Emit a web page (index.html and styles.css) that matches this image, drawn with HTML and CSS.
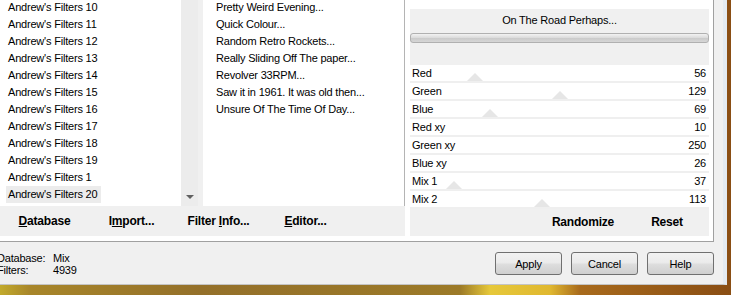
FILE: index.html
```html
<!DOCTYPE html>
<html lang="en">
  <head>
    <meta charset="UTF-8" />
    <title>Filters Unlimited</title>
    <link rel="stylesheet" href="styles.css">
  </head>
  <body>
    <div class="window">
      <div class="group">
        <div class="left">
          <div class="lists">
            <div class="list categories">
              <ul class="items">
                <li>Andrew's Filters 10</li>
                <li>Andrew's Filters 11</li>
                <li>Andrew's Filters 12</li>
                <li>Andrew's Filters 13</li>
                <li>Andrew's Filters 14</li>
                <li>Andrew's Filters 15</li>
                <li>Andrew's Filters 16</li>
                <li>Andrew's Filters 17</li>
                <li>Andrew's Filters 18</li>
                <li>Andrew's Filters 19</li>
                <li>Andrew's Filters 1</li>
                <li class="selected">Andrew's Filters 20</li>
                <li>Andrew's Filters 21</li>
              </ul>
              <div class="scrollbar"><span class="arrow-down"></span></div>
            </div>
            <div class="list effects">
              <ul class="items">
                <li>Pretty Weird Evening...</li>
                <li>Quick Colour...</li>
                <li>Random Retro Rockets...</li>
                <li>Really Sliding Off The paper...</li>
                <li>Revolver 33RPM...</li>
                <li>Saw it in 1961. It was old then...</li>
                <li>Unsure Of The Time Of Day...</li>
              </ul>
            </div>
          </div>
          <div class="actions">
            <span class="flat-btn"><u>D</u>atabase</span>
            <span class="flat-btn">I<u>m</u>port...</span>
            <span class="flat-btn">Filter <u>I</u>nfo...</span>
            <span class="flat-btn"><u>E</u>ditor...</span>
          </div>
        </div>

        <div class="panel">
          <div class="preset">
            <div class="preset-title">On The Road Perhaps...</div>
            <div class="progress"></div>
          </div>
          <div class="params">
            <div class="param"><span class="thumb" style="left: 57px"></span><span class="label">Red</span><span class="value">56</span></div>
            <div class="param"><span class="thumb" style="left: 142px"></span><span class="label">Green</span><span class="value">129</span></div>
            <div class="param"><span class="thumb" style="left: 72px"></span><span class="label">Blue</span><span class="value">69</span></div>
            <div class="param"><span class="label">Red xy</span><span class="value">10</span></div>
            <div class="param"><span class="label">Green xy</span><span class="value">250</span></div>
            <div class="param"><span class="label">Blue xy</span><span class="value">26</span></div>
            <div class="param"><span class="thumb" style="left: 36px"></span><span class="label">Mix 1</span><span class="value">37</span></div>
            <div class="param"><span class="thumb" style="left: 124px"></span><span class="label">Mix 2</span><span class="value">113</span></div>
          </div>
          <div class="panel-actions">
            <span class="flat-btn">Randomize</span>
            <span class="flat-btn">Reset</span>
          </div>
        </div>
      </div>

      <div class="footer">
        <div class="status">
          <span>Database:</span><span>Mix</span>
          <span>Filters:</span><span>4939</span>
        </div>
        <div class="dialog-buttons">
          <button>Apply</button>
          <button>Cancel</button>
          <button>Help</button>
        </div>
      </div>
    </div>
  </body>
</html>
```

FILE: styles.css
```css
body {
  margin: 0;
  height: 295px;
  overflow: hidden;
  font-family: "Liberation Sans", Arial, sans-serif;
  font-size: 11px;
  letter-spacing: -0.2px;
  color: #000;
  background: linear-gradient(90deg, #c2aa2c 0px, #a8862a 30px, #94702a 200px, #9c7a28 460px, #e6c83a 490px, #e0b830 550px, #a86a1c 580px, #8a4e14 731px);
}

.window {
  width: 723px;
  height: 284px;
  background-color: #f0f0f0;
  border-right: 4px solid #e4eaf0;
  border-bottom: 1px solid #c4c4c4;
}

.group {
  display: flex;
  width: 713px;
  height: 241px;
  background-color: #fff;
  border-right: 1px solid #a0a0a0;
  border-bottom: 1px solid #a0a0a0;
}

.left {
  width: 405px;
}

.lists {
  display: flex;
  height: 206px;
  background-color: #f0f0f0;
}

.list {
  position: relative;
  overflow: hidden;
  background-color: #fff;
}

.categories {
  display: flex;
  width: 198px;
}

.effects {
  width: 201px;
  margin-left: 5px;
  border-right: 1px solid #b4b4b4;
}

.items {
  list-style: none;
  margin: -1px 0 0 0;
  padding: 0;
  flex: 1;
}

.items li {
  height: 17px;
  line-height: 17px;
  white-space: nowrap;
}

.categories li {
  width: fit-content;
  margin-left: 6px;
  padding: 0 4px 0 2px;
}

.categories li.selected {
  background-color: #ececec;
}

.effects li {
  padding-left: 13px;
}

.scrollbar {
  width: 17px;
  height: 100%;
  background-color: #ececec;
  display: flex;
  justify-content: center;
  align-items: flex-end;
}

.arrow-down {
  width: 0;
  height: 0;
  margin-bottom: 7px;
  border-left: 4px solid transparent;
  border-right: 4px solid transparent;
  border-top: 4px solid #606060;
}

.actions {
  display: flex;
  height: 30px;
  padding-left: 1px;
  background-color: #f0f0f0;
}

.flat-btn {
  font-size: 12px;
  font-weight: bold;
  text-align: center;
  line-height: 30px;
}

.actions .flat-btn {
  width: 87px;
}

.panel {
  width: 299px;
  margin-left: 5px;
}

.preset {
  margin-top: 9px;
  height: 56px;
  background-color: #f0f0f0;
}

.preset-title {
  height: 22px;
  line-height: 22px;
  text-align: center;
}

.progress {
  height: 8px;
  margin-top: 2px;
  border: 1px solid #b0b0b0;
  border-radius: 3px;
  background: linear-gradient(#f2f2f2, #dcdcdc 45%, #cbcbcb 55%, #d6d6d6);
}

.param {
  position: relative;
  display: flex;
  justify-content: space-between;
  height: 16px;
  line-height: 16px;
  padding: 0 3px 0 2px;
  border-bottom: 2px solid #efefef;
}

.param .label,
.param .value {
  position: relative;
}

.thumb {
  position: absolute;
  bottom: 0;
  width: 0;
  height: 0;
  border-left: 8px solid transparent;
  border-right: 8px solid transparent;
  border-bottom: 8px solid #e6e6e6;
}

.panel-actions {
  display: flex;
  justify-content: flex-end;
  height: 27px;
  background-color: #f0f0f0;
}

.panel-actions .flat-btn {
  width: 84px;
  line-height: 26px;
}

.footer {
  display: flex;
  padding: 10px 9px 0 0;
}

.status {
  display: grid;
  grid-template-columns: 56px auto;
  line-height: 12px;
  margin-left: -3px;
}

.dialog-buttons {
  display: flex;
  gap: 9px;
  margin-left: auto;
}

button {
  width: 67px;
  height: 23px;
  padding: 0;
  font-family: "Liberation Sans", Arial, sans-serif;
  font-size: 11px;
  letter-spacing: -0.2px;
  color: #000;
  border: 1px solid #707070;
  border-radius: 3px;
  background: linear-gradient(#f2f2f2, #ebebeb 45%, #dddddd 55%, #cfcfcf);
}
```
